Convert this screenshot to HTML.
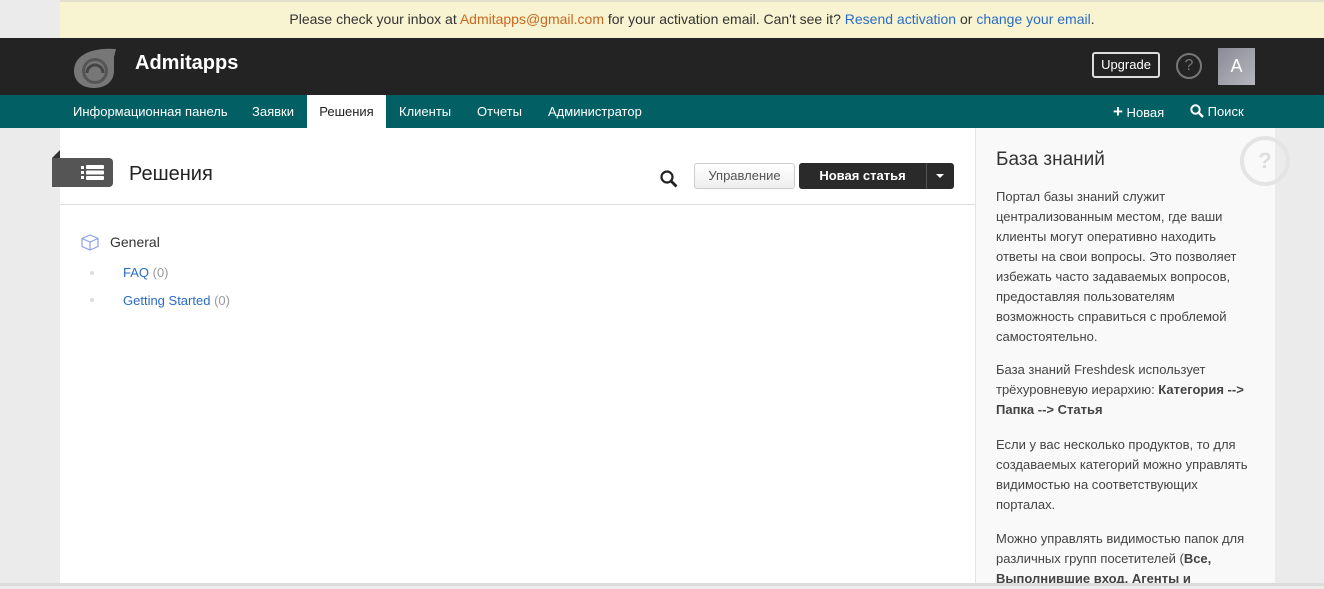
<!DOCTYPE html>
<html><head><meta charset="utf-8"><style>
*{margin:0;padding:0;box-sizing:border-box}
body{width:1324px;height:586px;overflow:hidden;background:#ebebeb;font-family:"Liberation Sans",sans-serif;position:relative}
.banner{position:absolute;left:60px;right:0;top:0;height:38px;background:#f8f3d0;border-top:2px solid #e2dfcf;text-align:center;font-size:14px;line-height:34px;color:#333;padding-left:0}
.banner .o{color:#c9681e}.banner .b{color:#2a6cc4}
.hdr{position:absolute;left:0;right:0;top:38px;height:57px;background:#232323}
.nav{position:absolute;left:0;right:0;top:95px;height:33px;background:#025f63}
.nav a{position:absolute;top:0;height:33px;line-height:33px;color:#fff;font-size:13px;text-decoration:none}
.main{position:absolute;left:60px;top:128px;width:915px;height:455px;background:#fff}
.side{position:absolute;left:975px;top:128px;width:300px;height:455px;background:#f9f9f9;border-left:1px solid #e4e4e4}
.side p{position:absolute;left:20px;width:260px;font-size:13px;line-height:20px;color:#444}
.bot{position:absolute;left:0;right:0;top:583px;height:3px;background:#dcdcdc}
</style></head><body>
<div class="banner">Please check your inbox at <span class="o">Admitapps@gmail.com</span> for your activation email. Can't see it? <span class="b">Resend activation</span> or <span class="b">change your email</span>.</div>
<div class="hdr">
<svg style="position:absolute;left:72px;top:9px" width="46" height="42" viewBox="0 0 46 42"><path d="M44 2 C20 0 2 8 2 24 C2 34 10 41 22 41 C34 41 42 34 42 24 L42 10 C40 6 36 4 30 4 C38 6 40 12 40 18 Z" fill="#777"/><circle cx="23" cy="24" r="13" fill="#555"/><circle cx="23" cy="24" r="10" fill="#777"/><path d="M15 26 a8 8 0 0 1 16 0" stroke="#444" stroke-width="3" fill="none"/></svg>
<div style="position:absolute;left:135px;top:14px;color:#fff;font-size:20px;font-weight:bold">Admitapps</div>
<div style="position:absolute;left:1092px;top:14px;width:68px;height:26px;border:2px solid #ddd;border-radius:3px;color:#fff;font-size:13px;line-height:22px;text-align:center">Upgrade</div>
<div style="position:absolute;left:1176px;top:15px;width:26px;height:26px;border:2px solid #777;border-radius:50%;color:#777;font-size:16px;line-height:22px;text-align:center">?</div>
<div style="position:absolute;left:1218px;top:10px;width:37px;height:37px;background:linear-gradient(135deg,#8a8c95,#b5b5bd);color:#fff;font-size:18px;line-height:37px;text-align:center">A</div>
</div>
<div class="nav">
<a style="left:73px">Информационная панель</a>
<a style="left:252px">Заявки</a>
<a style="left:307px;width:79px;background:#fff;color:#222;text-align:center">Решения</a>
<a style="left:399px">Клиенты</a>
<a style="left:477px">Отчеты</a>
<a style="left:548px">Администратор</a>
<a style="left:1113px"><b style="font-size:17px">+</b> Новая</a>
<a style="left:1190px"><svg width="14" height="14" viewBox="0 0 14 14" style="vertical-align:-2px"><circle cx="5.5" cy="5.5" r="4.2" stroke="#fff" stroke-width="2" fill="none"/><path d="M8.5 8.5 L13 13" stroke="#fff" stroke-width="2.4"/></svg> Поиск</a>
</div>
<div class="main">
<div style="position:absolute;left:0;top:76px;width:915px;height:1px;background:#ddd"></div>
<div style="position:absolute;left:-8px;top:30px;width:61px;height:29px;background:#555;border-radius:0 4px 4px 0"></div>
<div style="position:absolute;left:-8px;top:22px;width:0;height:0;border-left:8px solid transparent;border-bottom:8px solid #333"></div>
<svg style="position:absolute;left:21px;top:37px" width="23" height="15" viewBox="0 0 23 15"><g fill="#fff"><rect x="0" y="1" width="3" height="3"/><rect x="5" y="0" width="18" height="4" rx="1"/><rect x="0" y="6" width="3" height="3"/><rect x="5" y="5.5" width="18" height="4" rx="1"/><rect x="0" y="11" width="3" height="3"/><rect x="5" y="11" width="18" height="4" rx="1"/></g></svg>
<div style="position:absolute;left:69px;top:35px;font-size:20px;color:#222">Решения</div>
<svg style="position:absolute;left:600px;top:42px" width="18" height="18" viewBox="0 0 18 18"><circle cx="7" cy="7" r="5.5" stroke="#222" stroke-width="2.2" fill="none"/><path d="M11 11 L16.5 16.5" stroke="#222" stroke-width="2.8"/></svg>
<div style="position:absolute;left:634px;top:35px;width:101px;height:26px;border:1px solid #ccc;border-radius:3px;background:linear-gradient(#fff,#eee);font-size:13px;color:#555;text-align:center;line-height:24px">Управление</div>
<div style="position:absolute;left:739px;top:35px;width:155px;height:26px;border-radius:3px;background:#2a2a2a;color:#fff;font-size:13px;font-weight:bold;line-height:26px"><span style="position:absolute;left:0;width:127px;text-align:center">Новая статья</span><span style="position:absolute;left:127px;top:0;width:1px;height:26px;background:#555"></span><span style="position:absolute;left:137px;top:11px;border-left:4px solid transparent;border-right:4px solid transparent;border-top:4px solid #fff"></span></div>
<svg style="position:absolute;left:21px;top:106px" width="18" height="17" viewBox="0 0 18 17"><path d="M9 1 L17 4.5 L17 12.5 L9 16 L1 12.5 L1 4.5 Z M1 4.5 L9 8 L17 4.5 M9 8 L9 16" stroke="#8ea0e8" stroke-width="1.2" fill="none"/></svg>
<div style="position:absolute;left:50px;top:106px;font-size:14px;color:#333">General</div>
<div style="position:absolute;left:30px;top:143px;width:4px;height:4px;border-radius:50%;background:#ddd"></div>
<div style="position:absolute;left:63px;top:137px;font-size:13px;color:#2a6cc4">FAQ <span style="color:#999">(0)</span></div>
<div style="position:absolute;left:30px;top:170px;width:4px;height:4px;border-radius:50%;background:#ddd"></div>
<div style="position:absolute;left:63px;top:165px;font-size:13px;color:#2a6cc4">Getting Started <span style="color:#999">(0)</span></div>
</div>
<div class="side">
<div style="position:absolute;left:20px;top:21px;font-size:19px;color:#333">База знаний</div>
<div style="position:absolute;left:264px;top:8px;width:50px;height:50px;border:4px solid #e4e4e4;border-radius:50%;color:#ddd;font-size:22px;text-align:center;line-height:42px;font-weight:bold">?</div>
<p style="top:59px">Портал базы знаний служит централизованным местом, где ваши клиенты могут оперативно находить ответы на свои вопросы. Это позволяет избежать часто задаваемых вопросов, предоставляя пользователям возможность справиться с проблемой самостоятельно.</p>
<p style="top:232px">База знаний Freshdesk использует трёхуровневую иерархию: <b>Категория --&gt; Папка --&gt; Статья</b></p>
<p style="top:307px">Если у вас несколько продуктов, то для создаваемых категорий можно управлять видимостью на соответствующих порталах.</p>
<p style="top:401px">Можно управлять видимостью папок для различных групп посетителей (<b>Все, Выполнившие вход, Агенты и</b></p>
</div>
<div class="bot"></div>
</body></html>
